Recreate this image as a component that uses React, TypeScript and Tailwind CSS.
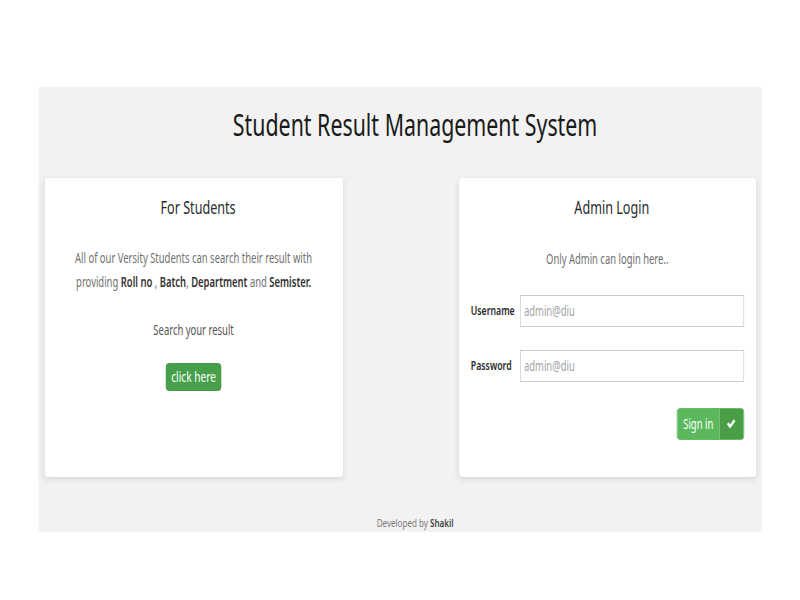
import { useState } from 'react';

// the whole page is drawn narrow, so it is laid out wide and squeezed on x
const font = { fontFamily: '"Noto Sans", "Open Sans", sans-serif' };

const App = () => {
  const [username, setUsername] = useState('');
  const [password, setPassword] = useState('');

  return (
    <div className="min-h-screen w-[800px] overflow-hidden bg-white" style={font}>
      <div className="w-[1143px] origin-top-left scale-x-[0.7] pt-[87px]">
        <div className="mx-auto flex h-[445px] w-[1033px] flex-col bg-[#f2f2f2]">
          <h1 className="mt-[17px] pl-[43px] text-center text-[30.5px] leading-[40px] text-[#1a1a1a]">
            Student Result Management System
          </h1>

          <div className="mt-[34px] flex justify-between px-[8.5px]">
            {/* students card */}
            <div className="h-[299px] w-[426px] rounded-[4px] bg-white text-center shadow-[0_2px_7px_rgba(0,0,0,0.12)]">
              <h2 className="mt-[17px] pl-[13px] text-[18px] leading-[24px] text-[#2b2b2b]">For Students</h2>
              <p className="mt-[27px] text-[13.5px] leading-[24px] text-[#6f6f6f]">
                All of our Versity Students can search their result with
                <br />
                providing <b className="font-semibold text-[#333]">Roll no</b> ,{' '}
                <b className="font-semibold text-[#333]">Batch</b>,{' '}
                <b className="font-semibold text-[#333]">Department</b> and{' '}
                <b className="font-semibold text-[#333]">Semister.</b>
              </p>
              <p className="mt-[24px] text-[13.5px] leading-[24px] text-[#555]">Search your result</p>
              <button className="mt-[21px] h-[28px] w-[79px] rounded-[4px] border border-[#3c8c3f] bg-[#46a049] text-[14.5px] text-white">
                click here
              </button>
            </div>

            {/* admin card */}
            <div className="h-[299px] w-[424px] rounded-[4px] bg-white px-[17px] shadow-[0_2px_7px_rgba(0,0,0,0.12)]">
              <h2 className="mt-[17px] pl-[13px] text-center text-[18px] leading-[24px] text-[#2b2b2b]">
                Admin Login
              </h2>
              <p className="mt-[28px] text-center text-[13.5px] leading-[24px] text-[#6f6f6f]">
                Only Admin can login here..
              </p>
              <div className="mt-[24px] flex items-center gap-[6px]">
                <label className="w-[64px] text-[12.5px] font-semibold text-[#2b2b2b]">Username</label>
                <input
                  value={username}
                  onChange={(e) => setUsername(e.target.value)}
                  placeholder="admin@diu"
                  className="h-[32px] flex-1 border border-[#ccc] px-[5px] text-[13.5px] text-[#333] outline-none placeholder:text-[#a3a3a3]"
                />
              </div>
              <div className="mt-[23px] flex items-center gap-[6px]">
                <label className="w-[64px] text-[12.5px] font-semibold text-[#2b2b2b]">Password</label>
                <input
                  type="password"
                  value={password}
                  onChange={(e) => setPassword(e.target.value)}
                  placeholder="admin@diu"
                  className="h-[32px] flex-1 border border-[#ccc] px-[5px] text-[13.5px] text-[#333] outline-none placeholder:text-[#a3a3a3]"
                />
              </div>
              <div className="mt-[26px] flex justify-end">
                <button className="flex h-[32px] w-[96px] overflow-hidden rounded-[4px] border border-[#4cae4c] text-white">
                  <span className="flex flex-1 items-center justify-center bg-[#5cb85c] text-[13.5px]">Sign in</span>
                  <span className="flex w-[34px] items-center justify-center bg-[#4a9e48]">
                    <svg width="13" height="10" viewBox="0 0 13 10" fill="white">
                      <path d="M0.5 5.2 L2.6 3.2 L5 5.5 L10.4 0.3 L12.5 2.3 L5 9.5 Z" />
                    </svg>
                  </span>
                </button>
              </div>
            </div>
          </div>

          <p className="mt-auto pb-[1px] pl-[43px] text-center text-[11.5px] leading-[16px] text-[#777]">
            Developed by <b className="font-semibold text-[#444]">Shakil</b>
          </p>
        </div>
      </div>
    </div>
  );
};

export default App;
